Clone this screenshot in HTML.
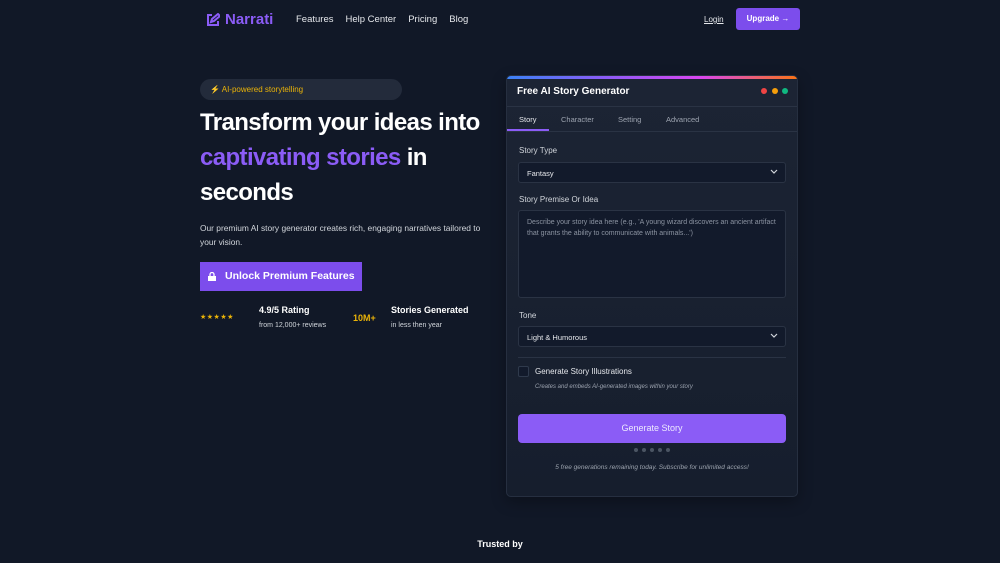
<!DOCTYPE html>
<html><head><meta charset="utf-8"><style>
*{box-sizing:border-box;margin:0;padding:0}
body{width:1000px;height:563px;background:#111827;font-family:"Liberation Sans",sans-serif;color:#fff;position:relative;overflow:hidden}
.a{position:absolute}
.nav{font-size:9.5px;line-height:12px}
.nav a{color:#e5e7eb;text-decoration:none;margin-right:12px}
.lbl{font-size:8px;color:#d1d5db}
.sel{background:#121a2b;border:1px solid #2a3344;border-radius:3px;height:21px;font-size:7.5px;color:#e5e7eb;padding:6px 8px;position:absolute;left:518px;width:268px}
.chev{position:absolute;right:7px;top:6px}
</style></head><body>
<div class="a" style="left:206px;top:11px;display:flex;align-items:center;color:#8b5cf6;font-weight:bold;font-size:15px;line-height:18px">
<svg width="14" height="14" viewBox="0 0 14 14" fill="none" stroke="#8b5cf6" stroke-width="2"><path d="M6 2H2v10h10V8"/><path d="M5 9l1-3 6-5 2 2-6 5z"/></svg><span style="margin-left:5px">Narrati</span></div>
<div class="a nav" style="left:296px;top:14px"><a>Features</a><a>Help Center</a><a>Pricing</a><a>Blog</a></div>
<div class="a" style="left:704px;top:15px;font-size:8px;line-height:10px;text-decoration:underline;color:#e5e7eb">Login</div>
<div class="a" style="left:736px;top:8px;width:64px;height:22px;background:#7c4dec;border-radius:3px;font-size:8px;font-weight:bold;text-align:center;line-height:22px">Upgrade →</div>

<div class="a" style="left:200px;top:79px;width:202px;height:21px;background:#232b3b;border-radius:11px;font-size:8px;line-height:11px;color:#eab308;padding:5px 10px">⚡ AI-powered storytelling</div>
<div class="a" style="left:200px;top:105px;font-size:24px;font-weight:bold;line-height:35px;letter-spacing:-0.6px">Transform your ideas into<br><span style="color:#8b5cf6">captivating stories</span> in<br>seconds</div>
<div class="a" style="left:200px;top:221px;font-size:8.4px;line-height:14px;color:#d1d5db;width:290px">Our premium AI story generator creates rich, engaging narratives tailored to your vision.</div>
<div class="a" style="left:200px;top:262px;width:162px;height:29px;background:#7c4dec;font-size:10.5px;font-weight:bold;line-height:29px;padding-left:25px">Unlock Premium Features
<svg class="a" style="left:8px;top:10px" width="8" height="9" viewBox="0 0 8 9"><rect x="0" y="4" width="8" height="5" fill="#fff"/><path d="M2 4V2.5a2 2 0 0 1 4 0V4" stroke="#fff" fill="none" stroke-width="1.3"/></svg></div>
<div class="a" style="left:200px;top:313px;font-size:7px;color:#eab308;letter-spacing:0.5px">★★★★★</div>
<div class="a" style="left:259px;top:305px;font-size:9px;font-weight:bold">4.9/5 Rating</div>
<div class="a" style="left:259px;top:322px;font-size:7px;color:#d1d5db">from 12,000+ reviews</div>
<div class="a" style="left:353px;top:313px;font-size:9px;font-weight:bold;color:#eab308">10M+</div>
<div class="a" style="left:391px;top:305px;font-size:9px;font-weight:bold">Stories Generated</div>
<div class="a" style="left:391px;top:322px;font-size:7px;color:#d1d5db">in less then year</div>

<div class="a" style="left:506px;top:75px;width:292px;height:422px;background:linear-gradient(180deg,#1c2434,#161e2d);border:1px solid #262f40;border-radius:5px;overflow:hidden;box-shadow:0 5px 15px rgba(0,0,0,.3)">
<div style="height:3px;background:linear-gradient(90deg,#3b82f6,#8b5cf6,#d946ef,#f97316)"></div></div>
<div class="a" style="left:517px;top:86px;font-size:10px;font-weight:bold;line-height:12px">Free AI Story Generator</div>
<div class="a" style="left:761px;top:88px;width:6px;height:6px;border-radius:50%;background:#ef4444"></div>
<div class="a" style="left:772px;top:88px;width:6px;height:6px;border-radius:50%;background:#f59e0b"></div>
<div class="a" style="left:782px;top:88px;width:6px;height:6px;border-radius:50%;background:#10b981"></div>
<div class="a" style="left:507px;top:106px;width:290px;height:1px;background:#2a3344"></div>
<div class="a" style="left:507px;top:131px;width:290px;height:1px;background:#2a3344"></div>
<div class="a" style="left:507px;top:129px;width:42px;height:2px;background:#8b5cf6"></div>
<div class="a" style="left:519px;top:115px;font-size:7.5px;color:#e5e7eb">Story</div>
<div class="a" style="left:561px;top:115px;font-size:7.5px;color:#9ca3af">Character</div>
<div class="a" style="left:618px;top:115px;font-size:7.5px;color:#9ca3af">Setting</div>
<div class="a" style="left:666px;top:115px;font-size:7.5px;color:#9ca3af">Advanced</div>
<div class="a lbl" style="left:519px;top:146px">Story Type</div>
<div class="sel" style="top:162px">Fantasy<svg class="chev" width="8" height="6" viewBox="0 0 8 6"><path d="M1 1l3 3 3-3" stroke="#d1d5db" fill="none" stroke-width="1.2"/></svg></div>
<div class="a lbl" style="left:519px;top:195px">Story Premise Or Idea</div>
<div class="sel" style="top:210px;height:88px;line-height:11px;color:#8b93a1;font-size:7px">Describe your story idea here (e.g., 'A young wizard discovers an ancient artifact that grants the ability to communicate with animals...')</div>
<div class="a lbl" style="left:519px;top:311px">Tone</div>
<div class="sel" style="top:326px">Light &amp; Humorous<svg class="chev" width="8" height="6" viewBox="0 0 8 6"><path d="M1 1l3 3 3-3" stroke="#d1d5db" fill="none" stroke-width="1.2"/></svg></div>
<div class="a" style="left:518px;top:357px;width:268px;height:1px;background:#2a3344"></div>
<div class="a" style="left:518px;top:366px;width:11px;height:11px;border:1px solid #2f3a4c;background:#121a2b;border-radius:2px"></div>
<div class="a" style="left:535px;top:367px;font-size:8px;color:#e5e7eb">Generate Story Illustrations</div>
<div class="a" style="left:535px;top:384px;font-size:6px;color:#9ca3af;font-style:italic">Creates and embeds AI-generated images within your story</div>
<div class="a" style="left:518px;top:414px;width:268px;height:29px;background:#8b5cf6;border-radius:4px;font-size:9px;text-align:center;line-height:29px;color:#ede9fe">Generate Story</div>
<div class="a" style="left:634px;top:448px;display:flex;gap:4px"><i style="width:4px;height:4px;border-radius:50%;background:#4b5563"></i><i style="width:4px;height:4px;border-radius:50%;background:#4b5563"></i><i style="width:4px;height:4px;border-radius:50%;background:#4b5563"></i><i style="width:4px;height:4px;border-radius:50%;background:#4b5563"></i><i style="width:4px;height:4px;border-radius:50%;background:#4b5563"></i></div>
<div class="a" style="left:507px;top:464px;width:290px;text-align:center;font-size:6.5px;color:#9ca3af;font-style:italic">5 free generations remaining today. Subscribe for unlimited access!</div>
<div class="a" style="left:0;top:539px;width:1000px;text-align:center;font-size:9px;font-weight:bold">Trusted by</div>
</body></html>
